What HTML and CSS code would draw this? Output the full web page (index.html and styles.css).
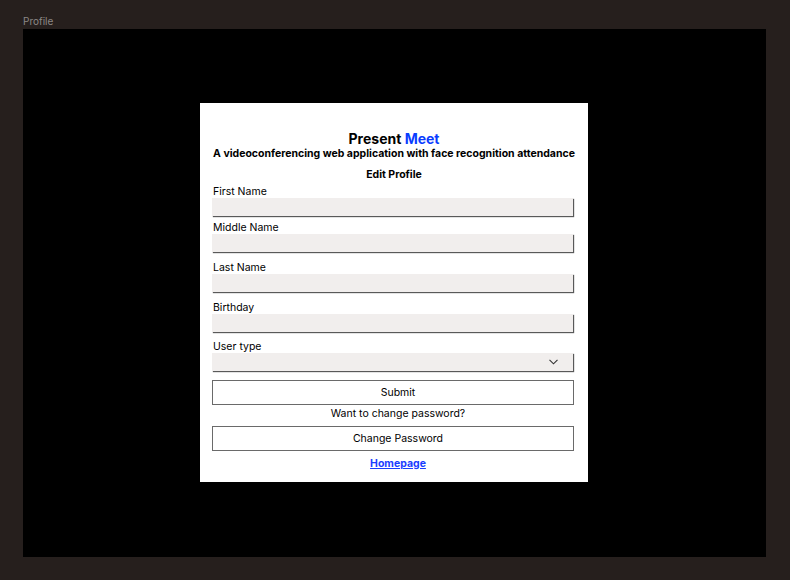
FILE: index.html
```html
<!DOCTYPE html>
<html>
<head>
<meta charset="utf-8">
<link rel="stylesheet" href="styles.css">
</head>
<body>
<div class="frame-label">Profile</div>
<div class="frame">
  <div class="card">
    <h1 class="title">Present <span class="accent">Meet</span></h1>
    <p class="subtitle">A videoconferencing web application with face recognition attendance</p>
    <h2 class="section">Edit Profile</h2>
    <div class="field first">
      <label class="label">First Name</label>
      <div class="input"></div>
    </div>
    <div class="field tight">
      <label class="label">Middle Name</label>
      <div class="input"></div>
    </div>
    <div class="field wide">
      <label class="label">Last Name</label>
      <div class="input"></div>
    </div>
    <div class="field wide">
      <label class="label">Birthday</label>
      <div class="input"></div>
    </div>
    <div class="field">
      <label class="label">User type</label>
      <div class="input select">
        <svg class="chev" width="9" height="6" viewBox="0 0 9 6"><path d="M0.5 0.8 L4.5 4.8 L8.5 0.8" fill="none" stroke="#333" stroke-width="1.1"/></svg>
      </div>
    </div>
    <div class="button submit">Submit</div>
    <p class="hint">Want to change password?</p>
    <div class="button">Change Password</div>
    <a class="home" href="#">Homepage</a>
  </div>
</div>
</body>
</html>
```
FILE: styles.css
```css
* { box-sizing: border-box; }
html, body { margin: 0; padding: 0; }
body {
  width: 790px;
  height: 580px;
  background: #261f1d;
  font-family: Inter, "Noto Sans", sans-serif;
  overflow: hidden;
}
.frame-label {
  color: #8c8886;
  font-size: 10px;
  line-height: 12px;
  padding: 15px 0 0 23px;
  height: 29px;
}
.frame {
  margin-left: 23px;
  width: 743px;
  height: 528px;
  background: #000;
  display: flex;
  align-items: flex-start;
  justify-content: flex-start;
  padding: 74px 0 0 177px;
}
.card {
  width: 388px;
  height: 379px;
  background: #fff;
  padding: 27px 14px 0 12px;
  display: flex;
  flex-direction: column;
  color: #000;
}
.title {
  margin: 0;
  font-size: 14px;
  line-height: 17px;
  font-weight: 700;
  text-align: center;
  padding-left: 2px;
}
.accent { color: #0a3cff; }
.subtitle {
  margin: 0 -6px 0 -4px;
  font-size: 10.5px;
  line-height: 13px;
  font-weight: 700;
  text-align: center;
  white-space: nowrap;
}
.section {
  margin: 9px 0 0;
  font-size: 10.5px;
  line-height: 12px;
  font-weight: 700;
  text-align: center;
  padding-left: 2px;
}
.field { display: flex; flex-direction: column; margin-top: 9px; }
.field.first { margin-top: 5px; }
.field.tight { margin-top: 6px; }
.field.wide { margin-top: 10px; }
.label {
  font-size: 10.5px;
  line-height: 12px;
  height: 12px;
  padding-left: 1px;
}
.input {
  height: 18px;
  margin-right: 1px;
  background: #f1eeed;
  box-shadow: 1px 1px 1px rgba(0,0,0,0.65);
}
.select { display: flex; align-items: center; justify-content: flex-end; padding-right: 15px; }
.chev { display: block; }
.button {
  height: 25px;
  border: 1px solid #6a6a6a;
  display: flex;
  align-items: center;
  justify-content: center;
  font-size: 10.5px;
  padding-left: 10px;
}
.submit { margin-top: 9px; }
.hint {
  margin: 2px 0 5px;
  font-size: 10.5px;
  line-height: 14px;
  text-align: center;
  padding-left: 10px;
}
.home {
  margin-top: 6px;
  font-size: 10.5px;
  line-height: 14px;
  font-weight: 700;
  color: #1a3dff;
  text-decoration: underline;
  align-self: center;
  position: relative;
  left: 5px;
}
```
